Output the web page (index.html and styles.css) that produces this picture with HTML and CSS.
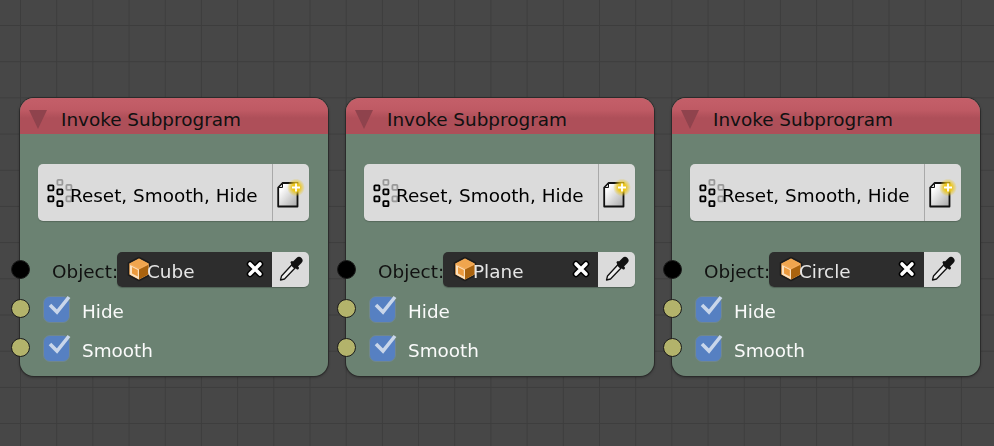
FILE: index.html
```html
<!DOCTYPE html>
<html lang="en">
<head>
    <meta charset="UTF-8">
    <title>Invoke Subprogram</title>
    <link rel="stylesheet" href="styles.css">
</head>
<body>
    <svg class="defs" width="0" height="0">
        <defs>
            <symbol id="tree" viewBox="0 0 26 28">
                <g fill="none" stroke="#999" stroke-width="1.8">
                    <rect x="10.4" y="0.9" width="5" height="5" rx="0.8"/>
                    <rect x="19.4" y="5.900" width="5" height="5" rx="0.8"/>
                    <rect x="19.4" y="17.4" width="5" height="5" rx="0.8"/>
                </g>
                <g fill="none" stroke="#000" stroke-width="1.9">
                    <rect x="1.4" y="6.400" width="5" height="5" rx="0.8"/>
                    <rect x="10.4" y="10.4" width="5" height="5" rx="0.8"/>
                    <rect x="1.4" y="17.4" width="5" height="5" rx="0.8"/>
                    <rect x="10.4" y="22.1" width="5" height="5" rx="0.8"/>
                </g>
            </symbol>
            <linearGradient id="pagefill" x1="0" y1="0" x2="1" y2="1">
                <stop offset="0.2" stop-color="#fff"/>
                <stop offset="1" stop-color="#a8a8a8"/>
            </linearGradient>
            <radialGradient id="glow">
                <stop offset="0.4" stop-color="#ecc61a"/>
                <stop offset="1" stop-color="#ecc61a" stop-opacity="0"/>
            </radialGradient>
            <symbol id="newfile" viewBox="0 0 28 30">
                <path d="M5.500 5H20.500V28.500H1.200V9.500z" fill="url(#pagefill)" stroke="#111" stroke-width="1.800" stroke-linejoin="round"/>
                <path d="M5.500 5.500v4H1.700z" fill="#ddd" stroke="#111" stroke-width="1"/>
                <circle cx="19" cy="9.500" r="9" fill="url(#glow)"/>
                <path d="M19 5.500v8M15 9.500h8" stroke="#fff" stroke-width="1.800"/>
            </symbol>
            <symbol id="cube" viewBox="0 0 24 26">
                <path d="M12 1.500 22.500 7v12L12 24.500 1.500 19V7z" fill="#f3ac5c" stroke="#1c1c1c" stroke-width="1.500" stroke-linejoin="round"/>
                <path d="M12 3 21 7.500 12 12 3 7.500z" fill="#f0a54e"/>
                <path d="M3 9 12 13.500V23.500L3 18.500z" fill="#fbe0bd"/>
                <path d="M12 13.500 21 9V18.500L12 23.500z" fill="#a9630f"/>
                <path d="M5 11 10.800 14V20.500L5 17.500z" fill="#eb9a3e"/>
            </symbol>
            <symbol id="clear" viewBox="0 0 18 18">
                <path d="M4 4 14 14M14 4 4 14" stroke="#000" stroke-width="6.500" stroke-linecap="round"/>
                <path d="M4 4 14 14M14 4 4 14" stroke="#fff" stroke-width="3.600" stroke-linecap="round"/>
            </symbol>
            <symbol id="dropper" viewBox="0 0 26 28">
                <path d="M15 9.500 3.500 22 2.500 26 6.500 25 18 13z" fill="#eee" stroke="#111" stroke-width="1.300" stroke-linejoin="round"/>
                <path d="M14 8.500 19.500 14" stroke="#111" stroke-width="3" stroke-linecap="round"/>
                <path d="M17 10.500 21 6.500" stroke="#111" stroke-width="7" stroke-linecap="round"/>
            </symbol>
            <symbol id="tick" viewBox="0 0 28 28">
                <path d="M6 10 13 17 25 2" fill="none" stroke="#c9d6ea" stroke-width="3.600"/>
            </symbol>
        </defs>
    </svg>

    <div class="canvas">
        <section class="node">
            <header class="node-head"><i class="arrow"></i><span>Invoke Subprogram</span></header>
            <div class="picker">
                <div class="picker-name"><svg class="icon-tree"><use href="#tree"/></svg><span>Reset, Smooth, Hide</span></div>
                <div class="picker-btn"><svg class="icon-new"><use href="#newfile"/></svg></div>
            </div>
            <div class="row row-object">
                <i class="socket socket-object"></i>
                <label class="object-label">Object:</label>
                <div class="object-field">
                    <div class="object-value"><svg class="icon-cube"><use href="#cube"/></svg><span>Cube</span><svg class="icon-clear"><use href="#clear"/></svg></div>
                    <div class="object-btn"><svg class="icon-dropper"><use href="#dropper"/></svg></div>
                </div>
            </div>
            <div class="row row-check">
                <i class="socket socket-bool"></i>
                <span class="check"><svg class="icon-tick"><use href="#tick"/></svg></span>
                <span class="check-label">Hide</span>
            </div>
            <div class="row row-check">
                <i class="socket socket-bool"></i>
                <span class="check"><svg class="icon-tick"><use href="#tick"/></svg></span>
                <span class="check-label">Smooth</span>
            </div>
        </section>

        <section class="node">
            <header class="node-head"><i class="arrow"></i><span>Invoke Subprogram</span></header>
            <div class="picker">
                <div class="picker-name"><svg class="icon-tree"><use href="#tree"/></svg><span>Reset, Smooth, Hide</span></div>
                <div class="picker-btn"><svg class="icon-new"><use href="#newfile"/></svg></div>
            </div>
            <div class="row row-object">
                <i class="socket socket-object"></i>
                <label class="object-label">Object:</label>
                <div class="object-field">
                    <div class="object-value"><svg class="icon-cube"><use href="#cube"/></svg><span>Plane</span><svg class="icon-clear"><use href="#clear"/></svg></div>
                    <div class="object-btn"><svg class="icon-dropper"><use href="#dropper"/></svg></div>
                </div>
            </div>
            <div class="row row-check">
                <i class="socket socket-bool"></i>
                <span class="check"><svg class="icon-tick"><use href="#tick"/></svg></span>
                <span class="check-label">Hide</span>
            </div>
            <div class="row row-check">
                <i class="socket socket-bool"></i>
                <span class="check"><svg class="icon-tick"><use href="#tick"/></svg></span>
                <span class="check-label">Smooth</span>
            </div>
        </section>

        <section class="node">
            <header class="node-head"><i class="arrow"></i><span>Invoke Subprogram</span></header>
            <div class="picker">
                <div class="picker-name"><svg class="icon-tree"><use href="#tree"/></svg><span>Reset, Smooth, Hide</span></div>
                <div class="picker-btn"><svg class="icon-new"><use href="#newfile"/></svg></div>
            </div>
            <div class="row row-object">
                <i class="socket socket-object"></i>
                <label class="object-label">Object:</label>
                <div class="object-field">
                    <div class="object-value"><svg class="icon-cube"><use href="#cube"/></svg><span>Circle</span><svg class="icon-clear"><use href="#clear"/></svg></div>
                    <div class="object-btn"><svg class="icon-dropper"><use href="#dropper"/></svg></div>
                </div>
            </div>
            <div class="row row-check">
                <i class="socket socket-bool"></i>
                <span class="check"><svg class="icon-tick"><use href="#tick"/></svg></span>
                <span class="check-label">Hide</span>
            </div>
            <div class="row row-check">
                <i class="socket socket-bool"></i>
                <span class="check"><svg class="icon-tick"><use href="#tick"/></svg></span>
                <span class="check-label">Smooth</span>
            </div>
        </section>
    </div>
</body>
</html>
```

FILE: styles.css
```css
* {
    margin: 0;
    padding: 0;
    box-sizing: border-box;
}

html,
body {
    height: 100%;
    overflow: hidden;
}

body {
    font-family: "DejaVu Sans", sans-serif;
    font-size: 18.4px;
    background-color: #474747;
    background-image:
        linear-gradient(to right, #3d3d3d 1px, transparent 1px),
        linear-gradient(to bottom, #3d3d3d 1px, transparent 1px);
    background-size: 36.2px 36.2px;
    background-position: 20px 25px;
}

.defs {
    display: block;
    height: 0;
}

.canvas {
    display: flex;
    gap: 18px;
    padding: 98px 0 0 20px;
    filter: blur(0.3px);
}

.node {
    width: 308px;
    height: 278px;
    background-color: rgba(108, 132, 116, 0.97);
    border-radius: 14px;
    box-shadow: 0 0 0 1px #2b2b2b, 0 1px 3px rgba(0, 0, 0, 0.5);
}

.node-head {
    display: flex;
    align-items: center;
    gap: 14px;
    height: 36px;
    padding: 6px 0 0 9px;
    border-radius: 14px 14px 0 0;
    background: linear-gradient(to bottom, #c45f69 0, #bf5a64 12px, #ae4f59 20px, #ae4f59 100%);
    color: #111;
}

.arrow {
    width: 0;
    height: 0;
    border-left: 9px solid transparent;
    border-right: 9px solid transparent;
    border-top: 19px solid #8f434d;
}

.picker {
    display: flex;
    height: 57px;
    margin: 30px 19px 0 18px;
    background-color: #dbdbdb;
    border-radius: 5px;
    box-shadow: 0 1px 1px rgba(0, 0, 0, 0.2);
    color: #000;
}

.picker-name {
    flex: 1;
    display: flex;
    align-items: center;
    padding-left: 9px;
    border-right: 1px solid #a9a9a9;
}

.picker-name span {
    padding-top: 6px;
}

.icon-tree {
    width: 26px;
    height: 28px;
    margin-right: -3px;
}

.picker-btn {
    width: 36px;
    display: flex;
    align-items: center;
    justify-content: center;
}

.icon-new {
    width: 28px;
    height: 30px;
}

.row {
    position: relative;
    display: flex;
    align-items: center;
}

.socket {
    position: absolute;
    left: -9px;
    width: 19px;
    height: 19px;
    border-radius: 50%;
    border: 1px solid #1a1a1a;
}

.socket-object {
    background-color: #000;
}

.socket-bool {
    background-color: #b3b36b;
}

.row-object {
    height: 36px;
    margin-top: 30px;
    padding-left: 32px;
    color: #111;
}

.object-label {
    width: 65px;
    padding-top: 4px;
}

.object-field {
    display: flex;
    width: 192px;
    height: 35px;
    border-radius: 5px;
    overflow: hidden;
    box-shadow: 0 1px 1px rgba(0, 0, 0, 0.25);
}

.object-value {
    flex: 1;
    display: flex;
    align-items: center;
    padding: 0 8px 0 10px;
    background-color: #2d2d2d;
    color: #e6e6e6;
}

.object-value span {
    flex: 1;
    padding-top: 4px;
}

.icon-cube {
    width: 24px;
    height: 26px;
    margin-right: -4px;
}

.icon-clear {
    width: 18px;
    height: 18px;
}

.object-btn {
    width: 37px;
    display: flex;
    align-items: center;
    justify-content: center;
    background-color: #dbdbdb;
}

.icon-dropper {
    width: 26px;
    height: 28px;
    margin-top: -3px;
}

.row-check {
    height: 39px;
    padding-left: 23px;
    color: #fff;
}

.row-object + .row-check {
    margin-top: 2px;
}

.check {
    width: 27px;
    height: 27px;
    margin-top: 1px;
    border-radius: 7px;
    background-color: #5680c2;
    border: 1px solid #71878b;
    position: relative;
}

.icon-tick {
    position: absolute;
    left: 0;
    top: -2px;
    width: 28px;
    height: 28px;
}

.check-label {
    margin-left: 12px;
    padding-top: 6px;
    color: #fafafa;
}
```
